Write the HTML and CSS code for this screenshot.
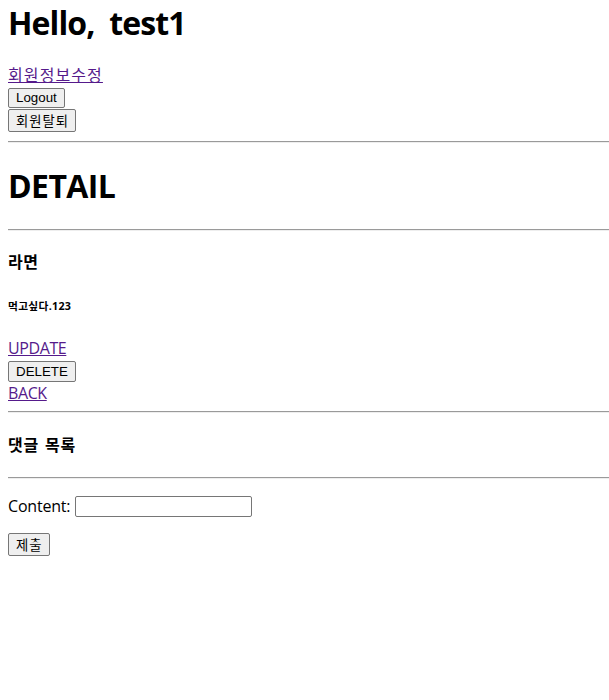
FILE: index.html
```html
<!DOCTYPE html>
<html lang="ko">
<head>
<meta charset="utf-8">
<title>DETAIL</title>
<link rel="stylesheet" href="styles.css">
</head>
<body>
<header class="user">
  <h1 class="title title-hello">Hello,&nbsp; test1</h1>
  <div class="user-actions">
    <a class="link link-ko" href="#">회원정보수정</a>
    <button class="btn btn-latin btn-logout" type="button">Logout</button>
    <button class="btn btn-ko btn-withdraw" type="button">회원탈퇴</button>
  </div>
</header>
<hr class="rule rule-1">
<h1 class="title title-detail">DETAIL</h1>
<hr class="rule rule-2">
<main class="post">
  <h4 class="post-title">라면</h4>
  <h6 class="post-body">먹고싶다.123</h6>
  <div class="post-actions">
    <a class="link link-latin" href="#">UPDATE</a>
    <button class="btn btn-latin btn-delete" type="button">DELETE</button>
    <a class="link link-latin" href="#">BACK</a>
  </div>
</main>
<hr class="rule rule-3">
<h4 class="comments-title">댓글 목록</h4>
<hr class="rule rule-4">
<form class="comment-form">
  <p class="field"><label class="field-label" for="content">Content:</label> <input class="field-input" id="content" type="text"></p>
  <p class="submit-row"><button class="btn btn-ko btn-submit" type="submit">제출</button></p>
</form>
</body>
</html>
```

FILE: styles.css
```css
html, body {
  background: #ffffff;
}
body {
  margin: 0 0 0 8px;
  font-family: "Open Sans", "Noto Sans CJK KR", sans-serif;
  font-size: 16px;
  color: #000000;
}
.title {
  font-size: 32px;
  font-weight: 700;
  line-height: 43px;
  margin: 0;
  letter-spacing: -0.6px;
}
.title-hello {
  margin: 1px 0 20px;
  letter-spacing: -0.9px;
}
.title-detail {
  margin: 21px 0 22px;
}
.user-actions,
.post-actions {
  display: flex;
  flex-direction: column;
  align-items: flex-start;
}
.link {
  color: #551a8b;
  text-decoration: underline;
  line-height: 22px;
  font-size: 16px;
}
.link-ko {
  letter-spacing: 1.1px;
}
.link-latin {
  letter-spacing: -0.4px;
}
.btn {
  box-sizing: border-box;
  font-size: 13.33px;
  color: #000000;
  background: #efefef;
  border: 1px solid #767676;
  border-radius: 2px;
  padding: 0 7px;
  margin: 0;
}
.btn-latin {
  font-family: "Liberation Sans", Arial, sans-serif;
  height: 20px;
  line-height: 18px;
}
.btn-ko {
  font-family: "Noto Sans CJK KR", sans-serif;
  height: 23px;
  line-height: 21px;
  letter-spacing: 1px;
  padding: 0 6px 0 7px;
}
.btn-logout {
  margin-top: 2px;
}
.btn-withdraw {
  margin-top: 1px;
}
.btn-delete {
  margin-top: 2.5px;
  height: 21px;
  line-height: 19px;
}
.rule {
  border: 0;
  border-top: 1px solid #9a9a9a;
  border-bottom: 1px solid #eeeeee;
  height: 0;
  margin: 0;
}
.rule-1 {
  margin-top: 9px;
}
.post-title {
  font-size: 16px;
  font-weight: 700;
  line-height: 21px;
  margin: 20.5px 0 0;
  letter-spacing: 0.5px;
}
.post-body {
  font-size: 10.72px;
  font-weight: 700;
  line-height: 14px;
  margin: 26.5px 0 23.5px;
  letter-spacing: 0.3px;
}
.rule-3 {
  margin-top: 7px;
}
.comments-title {
  font-size: 16px;
  font-weight: 700;
  line-height: 21px;
  margin: 21.5px 0 21.5px;
  letter-spacing: 0.8px;
  word-spacing: 1px;
}
.comment-form {
  margin: 0;
}
.field {
  display: flex;
  align-items: center;
  gap: 5px;
  height: 22px;
  margin: 16px 0;
  line-height: 22px;
}
.field-label {
  font-size: 16px;
  letter-spacing: -0.2px;
}
.field-input {
  box-sizing: border-box;
  width: 177px;
  height: 21px;
  border: 1px solid #767676;
  border-radius: 2px;
  padding: 1px 2px;
  margin: 0;
  font-size: 13.33px;
}
.submit-row {
  margin: 16px 0;
}
```
